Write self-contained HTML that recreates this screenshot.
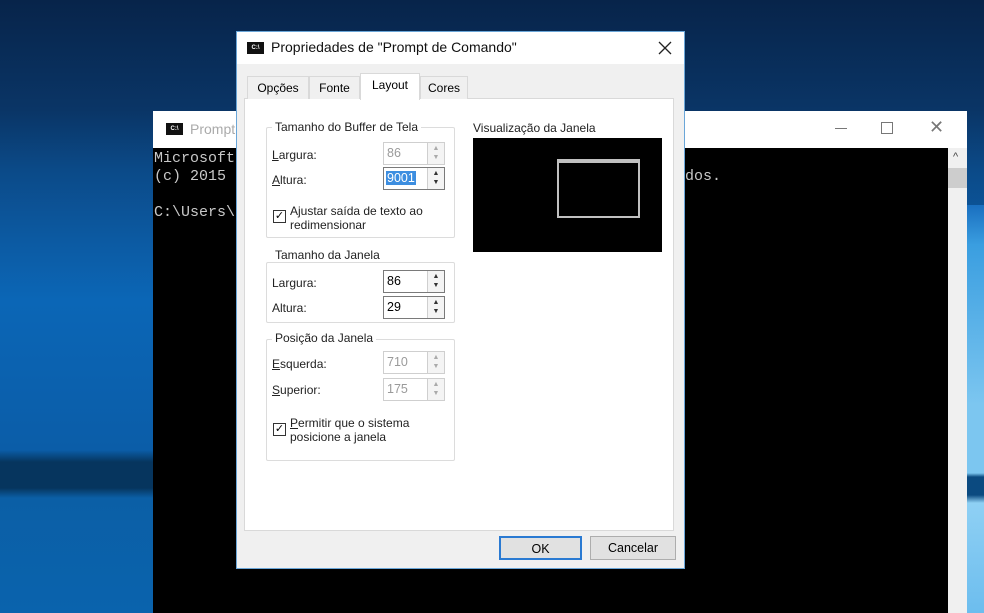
<!DOCTYPE html>
<html><head><meta charset="utf-8"><style>
*{margin:0;padding:0;box-sizing:border-box}
body{width:984px;height:613px;overflow:hidden;position:relative;font-family:"Liberation Sans",sans-serif;font-size:12px;color:#000;
background:linear-gradient(180deg,#07244a 0px,#0a3566 110px,#0b4a88 170px,#0c5aa2 240px,#0b66b6 300px,#0b5da8 450px,#06355e 462px,#06355e 488px,#0b5fa6 498px,#0a63ad 613px);}
.a{position:absolute}
.con{left:153px;top:111px;width:814px;height:502px;background:#000}
.ctitle{left:153px;top:111px;width:814px;height:37px;background:#fff}
.mono{font-family:"Liberation Mono",monospace;font-size:15px;color:#c8c8c8;white-space:pre}
.dlg{left:236px;top:31px;width:449px;height:538px;background:#f0f0f0;border:1px solid #6aa6d8}
.panel{left:244px;top:98px;width:430px;height:433px;background:#fff;border:1px solid #d9d9d9}
.tab{height:23px;top:76px;background:#f0f0f0;border:1px solid #d9d9d9;border-bottom:none;text-align:center;line-height:22px;font-size:12px}
.grp{border:1px solid #dcdcdc;border-radius:2px}
.glab{background:#fff;padding:0 3px;font-size:12px;color:#222}
.lab{font-size:12px;color:#222}
.spin{width:62px;height:23px;border:1px solid #7a7a7a;background:#fff}
.spin.dis{border-color:#cfcfcf}
.spin .v{position:absolute;left:3px;top:3px;font-size:12.5px}
.spin.dis .v{color:#9a9a9a}
.spin .b{position:absolute;right:0;top:0;width:17px;height:21px;border-left:1px solid #cfcfcf;background:#f4f4f4;font-size:7px;line-height:9px;text-align:center;color:#333;padding-top:1px}
.spin.dis .b{color:#aaa}
.cb{width:13px;height:13px;border:1px solid #333;background:#fff}
.btn{height:24px;background:#e1e1e1;border:1px solid #adadad;text-align:center;line-height:22px;font-size:12.5px}
</style></head><body>
<div class="a" style="left:967px;top:205px;width:17px;height:408px;background:linear-gradient(180deg,#1a6fc0 0,#3a9ee0 40px,#7cc6f0 200px,#7cc6f0 268px,#0b4a80 272px,#0b4a80 290px,#8fd0f4 298px,#6cbdee 408px)"></div>
<div class="a con"></div>
<div class="a ctitle"></div>
<div class="a" style="left:166px;top:123px;width:17px;height:12px;background:#111;color:#fff;font-size:6px;line-height:12px;font-weight:bold;text-align:center">C:\</div>
<div class="a" style="left:190px;top:121px;font-size:14px;color:#aaa">Prompt</div>
<div class="a" style="left:835px;top:128px;width:12px;height:1px;background:#777"></div>
<div class="a" style="left:881px;top:122px;width:12px;height:12px;border:1px solid #777"></div>
<div class="a" style="left:929px;top:117px;font-size:18px;color:#777;line-height:20px">✕</div>
<div class="a" style="left:948px;top:148px;width:19px;height:465px;background:#f0f0f0"></div>
<div class="a" style="left:948px;top:168px;width:19px;height:20px;background:#cdcdcd"></div>
<div class="a" style="left:953px;top:151px;font-size:11px;color:#444">^</div>
<div class="a mono" style="left:154px;top:150px;line-height:18px">Microsoft
(c) 2015

C:\Users\</div>
<div class="a mono" style="left:685px;top:168px">dos.</div>

<div class="a dlg"></div>
<div class="a" style="left:237px;top:32px;width:447px;height:32px;background:#fff"></div>
<div class="a" style="left:247px;top:42px;width:17px;height:12px;background:#111;color:#fff;font-size:6px;line-height:12px;font-weight:bold;text-align:center">C:\</div>
<div class="a" style="left:271px;top:39px;font-size:14px;color:#111">Propriedades de "Prompt de Comando"</div>
<svg class="a" style="left:658px;top:41px" width="14" height="14"><path d="M1 1L13 13M13 1L1 13" stroke="#222" stroke-width="1.3"/></svg>
<div class="a panel"></div>
<div class="a tab" style="left:247px;width:62px">Opções</div>
<div class="a tab" style="left:309px;width:51px">Fonte</div>
<div class="a tab" style="left:420px;width:48px">Cores</div>
<div class="a tab" style="left:360px;top:73px;width:60px;height:27px;background:#fff;line-height:22px">Layout</div>

<div class="a grp" style="left:266px;top:127px;width:189px;height:111px"></div>
<div class="a glab" style="left:272px;top:120px">Tamanho do Buffer de Tela</div>
<div class="a lab" style="left:272px;top:148px"><u>L</u>argura:</div>
<div class="a spin dis" style="left:383px;top:142px"><span class="v">86</span><div class="b">▲<br>▼</div></div>
<div class="a lab" style="left:272px;top:173px"><u>A</u>ltura:</div>
<div class="a spin" style="left:383px;top:167px"><span class="v" style="background:#3d8ee0;color:#fff;padding:0 1px;left:2px">9001</span><div class="b">▲<br>▼</div></div>
<div class="a cb" style="left:273px;top:210px;font-size:11px;line-height:11px;text-align:center">✓</div>
<div class="a lab" style="left:290px;top:204px;line-height:14px">Ajustar saída de texto ao<br>redimensionar</div>

<div class="a grp" style="left:266px;top:262px;width:189px;height:61px"></div>
<div class="a glab" style="left:272px;top:248px">Tamanho da Janela</div>
<div class="a lab" style="left:272px;top:276px">Largura:</div>
<div class="a spin" style="left:383px;top:270px"><span class="v">86</span><div class="b">▲<br>▼</div></div>
<div class="a lab" style="left:272px;top:301px">Altura:</div>
<div class="a spin" style="left:383px;top:296px"><span class="v">29</span><div class="b">▲<br>▼</div></div>

<div class="a grp" style="left:266px;top:339px;width:189px;height:122px"></div>
<div class="a glab" style="left:272px;top:331px">Posição da Janela</div>
<div class="a lab" style="left:272px;top:357px"><u>E</u>squerda:</div>
<div class="a spin dis" style="left:383px;top:351px"><span class="v">710</span><div class="b">▲<br>▼</div></div>
<div class="a lab" style="left:272px;top:383px"><u>S</u>uperior:</div>
<div class="a spin dis" style="left:383px;top:378px"><span class="v">175</span><div class="b">▲<br>▼</div></div>
<div class="a cb" style="left:273px;top:423px;font-size:11px;line-height:11px;text-align:center">✓</div>
<div class="a lab" style="left:290px;top:416px;line-height:14px"><u>P</u>ermitir que o sistema<br>posicione a janela</div>

<div class="a lab" style="left:473px;top:121px">Visualização da Janela</div>
<div class="a" style="left:473px;top:138px;width:189px;height:114px;background:#000"></div>
<div class="a" style="left:557px;top:159px;width:83px;height:59px;border:2px solid #c0c0c0;border-top-width:4px;background:#000"></div>

<div class="a btn" style="left:499px;top:536px;width:83px;border:2px solid #2a7ad2">OK</div>
<div class="a btn" style="left:590px;top:536px;width:86px">Cancelar</div>
</body></html>
